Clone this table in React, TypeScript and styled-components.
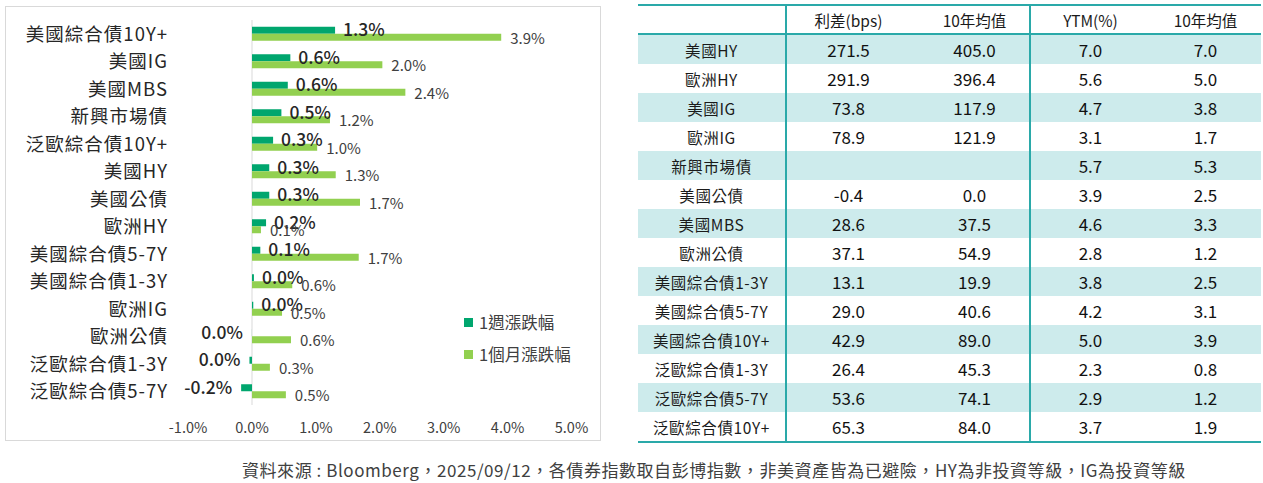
import { FC } from "react";
import styled, { createGlobalStyle } from "styled-components";

const GlobalStyle = createGlobalStyle`
  html, body {
    margin: 0;
    padding: 0;
    background: #ffffff;
    font-family: "Noto Sans CJK TC", "Noto Sans", sans-serif;
    color: #262626;
  }
`;

const FONT = `"Noto Sans CJK TC", "Noto Sans", sans-serif`;

type Row = { name: string; week: number; month: number };

// 1週 / 1個月 漲跌幅 (%)
const perf: Row[] = [
  { name: "美國綜合債10Y+", week: 1.3, month: 3.9 },
  { name: "美國IG", week: 0.6, month: 2.04 },
  { name: "美國MBS", week: 0.56, month: 2.4 },
  { name: "新興市場債", week: 0.46, month: 1.22 },
  { name: "泛歐綜合債10Y+", week: 0.33, month: 1.02 },
  { name: "美國HY", week: 0.27, month: 1.31 },
  { name: "美國公債", week: 0.27, month: 1.69 },
  { name: "歐洲HY", week: 0.22, month: 0.14 },
  { name: "美國綜合債5-7Y", week: 0.13, month: 1.67 },
  { name: "美國綜合債1-3Y", week: 0.03, month: 0.63 },
  { name: "歐洲IG", week: 0.02, month: 0.47 },
  { name: "歐洲公債", week: -0.001, month: 0.61 },
  { name: "泛歐綜合債1-3Y", week: -0.04, month: 0.28 },
  { name: "泛歐綜合債5-7Y", week: -0.17, month: 0.53 },
];

const spreads = [
  ["美國HY", "271.5", "405.0", "7.0", "7.0"],
  ["歐洲HY", "291.9", "396.4", "5.6", "5.0"],
  ["美國IG", "73.8", "117.9", "4.7", "3.8"],
  ["歐洲IG", "78.9", "121.9", "3.1", "1.7"],
  ["新興市場債", "", "", "5.7", "5.3"],
  ["美國公債", "-0.4", "0.0", "3.9", "2.5"],
  ["美國MBS", "28.6", "37.5", "4.6", "3.3"],
  ["歐洲公債", "37.1", "54.9", "2.8", "1.2"],
  ["美國綜合債1-3Y", "13.1", "19.9", "3.8", "2.5"],
  ["美國綜合債5-7Y", "29.0", "40.6", "4.2", "3.1"],
  ["美國綜合債10Y+", "42.9", "89.0", "5.0", "3.9"],
  ["泛歐綜合債1-3Y", "26.4", "45.3", "2.3", "0.8"],
  ["泛歐綜合債5-7Y", "53.6", "74.1", "2.9", "1.2"],
  ["泛歐綜合債10Y+", "65.3", "84.0", "3.7", "1.9"],
];

const DARK = "#00a66e";
const LIGHT = "#92d050";
const TEAL = "#2aa9a9";

const Page = styled.div`
  width: 1263px;
  height: 483px;
  box-sizing: border-box;
  padding: 4px 2px 0 5px;
  display: flex;
  flex-direction: column;
`;

const Top = styled.div`
  display: flex;
  align-items: flex-start;
  gap: 37px;
`;

const ChartPanel = styled.div`
  width: 594px;
  height: 433px;
  margin-top: 2px;
  border: 1px solid #d9d9d9;
  flex-shrink: 0;

  svg {
    display: block;
  }
`;

const Table = styled.table`
  width: 623px;
  border-collapse: collapse;
  table-layout: fixed;
  border-top: 2px solid ${TEAL};
  border-bottom: 2px solid ${TEAL};
  font-family: ${FONT};
`;

const HeadCell = styled.th<{ $divider?: boolean; $shift?: number }>`
  height: 27px;
  padding: 0 0 0 ${(p) => p.$shift ?? 0}px;
  font-weight: 400;
  font-size: 15.5px;
  color: #1a1a1a;
  text-align: center;
  border-bottom: 2px solid ${TEAL};
  border-right: ${(p) => (p.$divider ? `2px solid ${TEAL}` : "none")};
`;

const BodyRow = styled.tr<{ $shaded: boolean }>`
  background: ${(p) => (p.$shaded ? "#cdebec" : "#ffffff")};
`;

const NameCell = styled.td`
  height: 29px;
  padding: 0;
  font-size: 15.5px;
  letter-spacing: 0.6px;
  color: #1a1a1a;
  text-align: center;
  border-right: 2px solid ${TEAL};
`;

const ValueCell = styled.td<{ $divider?: boolean; $shift?: number }>`
  height: 29px;
  padding: 0 0 0 ${(p) => p.$shift ?? 0}px;
  font-size: 17px;
  color: #111111;
  text-align: center;
  border-right: ${(p) => (p.$divider ? `2px solid ${TEAL}` : "none")};
`;

const Footer = styled.div`
  padding: 14px 0 0 237px;
  font-family: ${FONT};
  font-size: 17px;
  letter-spacing: 0.55px;
  color: #404040;
  white-space: nowrap;
`;

// chart geometry, in page pixels
const ZERO_X = 252;
const PX_PER_PCT = 63.9;
const PLOT_TOP = 20;
const PLOT_BOTTOM = 405;
const BAND = (PLOT_BOTTOM - PLOT_TOP) / perf.length;
const BAR_H = 7;

const xOf = (v: number) => ZERO_X + v * PX_PER_PCT;
const fmt = (v: number) => `${(Math.round(v * 10) / 10).toFixed(1)}%`.replace("-0.0", "0.0");

const PerformanceChart: FC = () => (
  <svg width={594} height={433} viewBox="6 7 594 433" fontFamily={FONT}>
    <line x1={ZERO_X} y1={PLOT_TOP} x2={ZERO_X} y2={PLOT_BOTTOM} stroke="#d9d9d9" strokeWidth={1} />

    {perf.map((r, i) => {
      const cy = PLOT_TOP + BAND * (i + 0.5);
      const wx = xOf(r.week);
      const mx = xOf(r.month);
      const neg = r.week < 0;
      return (
        <g key={r.name}>
          <text x={168} y={cy + 7} textAnchor="end" fontSize={18.5} letterSpacing={1} fill="#262626">
            {r.name}
          </text>
          <rect x={Math.min(wx, ZERO_X)} y={cy - BAR_H} width={Math.abs(wx - ZERO_X)} height={BAR_H} fill={DARK} />
          <rect x={ZERO_X} y={cy} width={mx - ZERO_X} height={BAR_H} fill={LIGHT} />
          <text
            x={neg ? Math.min(wx, ZERO_X) - 9 : wx + 8}
            y={cy + 2.5}
            textAnchor={neg ? "end" : "start"}
            fontSize={17.5}
            fontWeight={500}
            fill="#262626"
          >
            {fmt(r.week)}
          </text>
          <text x={mx + 9} y={cy + 10} fontSize={15} fill="#404040">
            {fmt(r.month)}
          </text>
        </g>
      );
    })}

    {[-1, 0, 1, 2, 3, 4, 5].map((t) => (
      <text key={t} x={xOf(t)} y={433} textAnchor="middle" fontSize={14.5} fill="#404040">
        {`${t.toFixed(1)}%`}
      </text>
    ))}

    <rect x={464} y={318} width={9} height={9} fill={DARK} />
    <text x={479} y={329} fontSize={16.5} fill="#404040">
      1週漲跌幅
    </text>
    <rect x={464} y={350} width={9} height={9} fill={LIGHT} />
    <text x={479} y={361} fontSize={16.5} fill="#404040">
      1個月漲跌幅
    </text>
  </svg>
);

const SpreadTable: FC = () => (
  <Table>
    <colgroup>
      <col style={{ width: 148 }} />
      <col style={{ width: 124 }} />
      <col style={{ width: 120 }} />
      <col style={{ width: 120 }} />
      <col style={{ width: 111 }} />
    </colgroup>
    <thead>
      <tr>
        <HeadCell $divider />
        <HeadCell>利差(bps)</HeadCell>
        <HeadCell $divider $shift={10}>
          10年均值
        </HeadCell>
        <HeadCell>YTM(%)</HeadCell>
        <HeadCell>10年均值</HeadCell>
      </tr>
    </thead>
    <tbody>
      {spreads.map((row, i) => (
        <BodyRow key={row[0]} $shaded={i % 2 === 0}>
          <NameCell>{row[0]}</NameCell>
          <ValueCell>{row[1]}</ValueCell>
          <ValueCell $divider $shift={10}>
            {row[2]}
          </ValueCell>
          <ValueCell>{row[3]}</ValueCell>
          <ValueCell>{row[4]}</ValueCell>
        </BodyRow>
      ))}
    </tbody>
  </Table>
);

const App: FC = () => (
  <>
    <GlobalStyle />
    <Page>
      <Top>
        <ChartPanel>
          <PerformanceChart />
        </ChartPanel>
        <SpreadTable />
      </Top>
      <Footer>
        資料來源 : Bloomberg，2025/09/12，各債券指數取自彭博指數，非美資產皆為已避險，HY為非投資等級，IG為投資等級
      </Footer>
    </Page>
  </>
);

export default App;
